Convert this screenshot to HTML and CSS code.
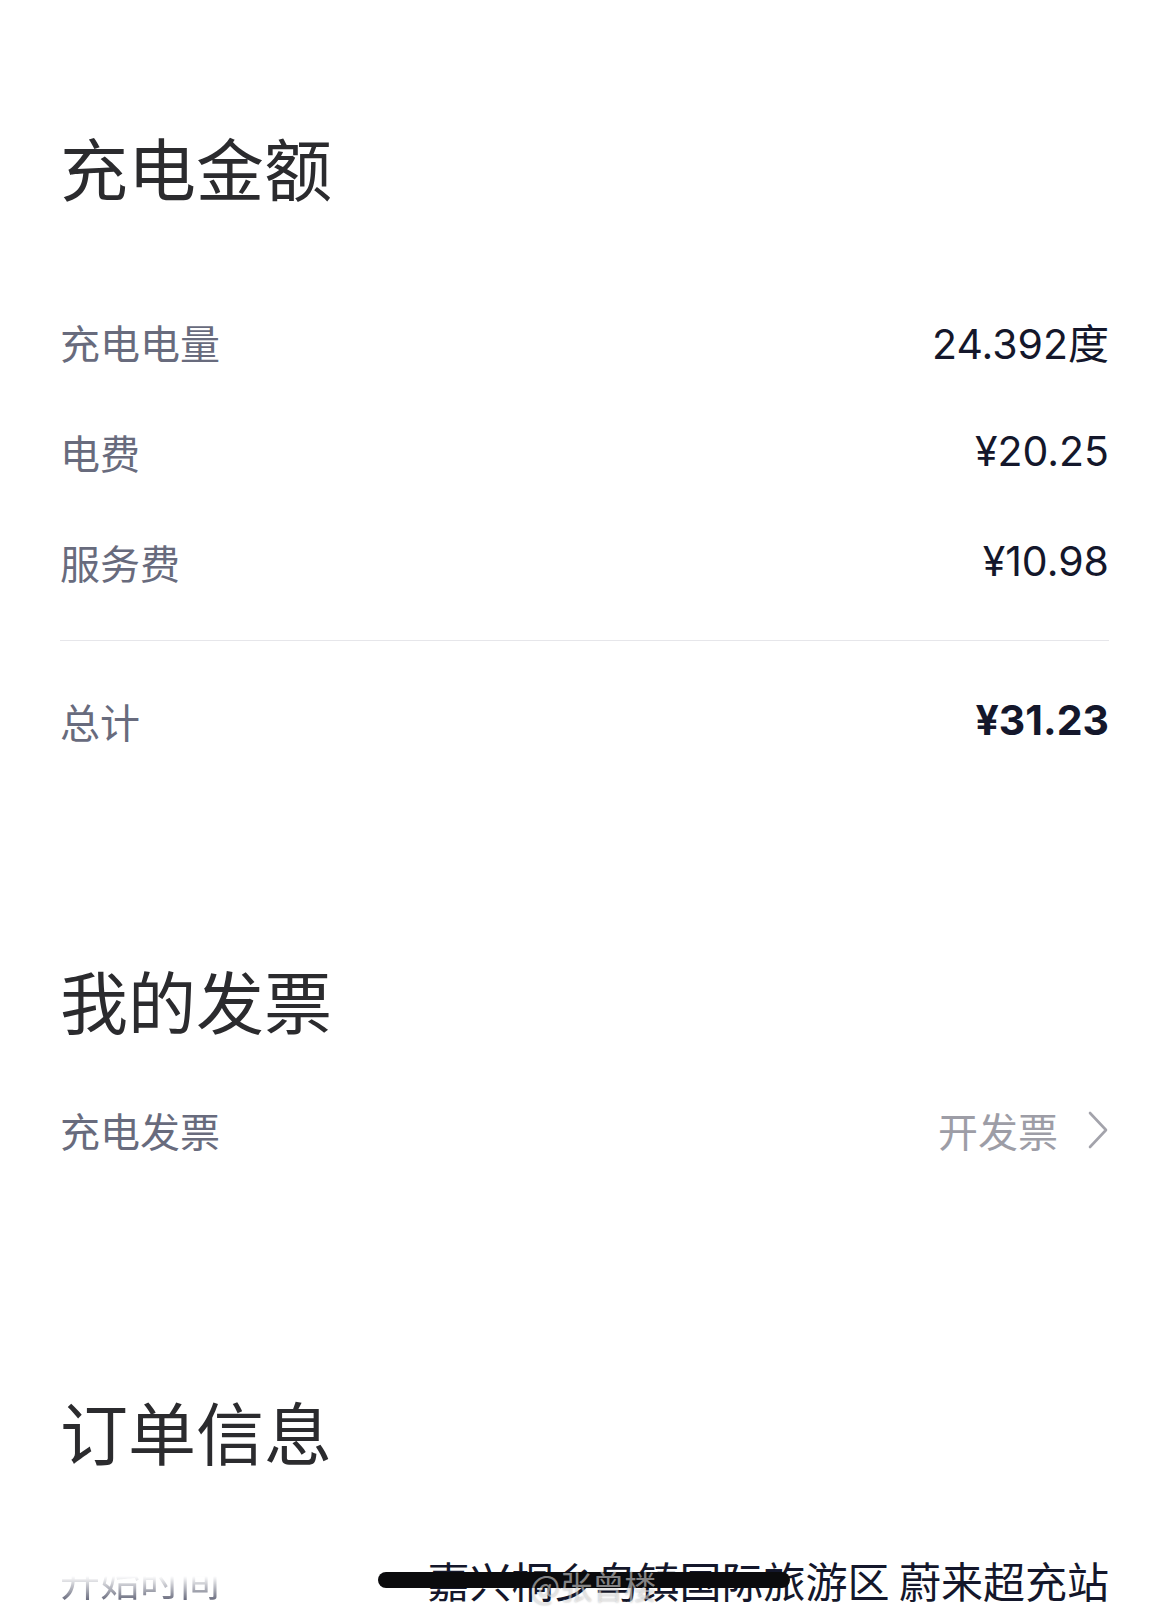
FILE: index.html
```html
<!DOCTYPE html>
<html lang="zh-CN">
<head>
<meta charset="utf-8">
<title>充电订单</title>
<link rel="stylesheet" href="styles.css">
</head>
<body>
<main class="page">
  <section class="section section-amount">
    <h1 class="section-title">充电金额</h1>
    <div class="rows">
      <div class="row"><span class="label">充电电量</span><span class="value">24.392度</span></div>
      <div class="row"><span class="label">电费</span><span class="value">¥20.25</span></div>
      <div class="row"><span class="label">服务费</span><span class="value">¥10.98</span></div>
    </div>
    <div class="divider"></div>
    <div class="row row-total"><span class="label">总计</span><span class="value value-bold">¥31.23</span></div>
  </section>

  <section class="section section-invoice">
    <h1 class="section-title">我的发票</h1>
    <div class="row row-invoice">
      <span class="label">充电发票</span>
      <span class="action">开发票
        <svg class="chevron" viewBox="0 0 22 40" width="22" height="40" aria-hidden="true"><path d="M3 3 L19 20 L3 37" fill="none" stroke="#a3a3ab" stroke-width="2.6" stroke-linecap="round" stroke-linejoin="round"/></svg>
      </span>
    </div>
  </section>

  <section class="section section-order">
    <h1 class="section-title">订单信息</h1>
    <div class="row row-last">
      <span class="label label-faded">开始时间</span>
      <span class="value value-station">嘉兴桐乡乌镇国际旅游区 蔚来超充站</span>
      <span class="redact"></span>
      <span class="watermark">@张曾楼</span>
    </div>
  </section>
</main>
</body>
</html>
```

FILE: styles.css
```css
html, body {
  margin: 0;
  padding: 0;
  background: #ffffff;
}
body {
  width: 1158px;
  height: 1610px;
  overflow: hidden;
  font-family: "Noto Sans CJK SC", "Noto Sans", sans-serif;
}
.page {
  padding: 132px 49px 0 60px;
}
.section-title {
  margin: 0;
  line-height: 69px;
  padding-bottom: 11px;
  font-size: 68px;
  font-weight: 400;
  color: #2b2b2e;
  letter-spacing: 0;
}
.rows {
  margin-top: 75px;
}
.row {
  height: 110px;
  display: flex;
  align-items: center;
  justify-content: space-between;
  font-size: 40px;
}
.label {
  color: #686b7d;
  font-weight: 400;
}
.value {
  font-family: Inter, "Noto Sans CJK SC", sans-serif;
  font-size: 41px;
  color: #14172b;
  font-weight: 400;
  position: relative;
  top: -1px;
}
.value-bold {
  font-weight: 700;
  top: -1px;
}
.divider {
  margin-top: 23px;
  height: 1px;
  background: #e6e6ea;
}
.row-total {
  margin-top: 25px;
}
.section-invoice {
  margin-top: 189px;
}
.row-invoice {
  margin-top: 30px;
}
.action {
  display: flex;
  align-items: center;
  gap: 29px;
  color: #9d9da6;
}
.chevron {
  display: block;
}
.section-order {
  margin-top: 211px;
}
.row-last {
  margin-top: 48px;
  position: relative;
}
.label-faded {
  color: #55586c;
  -webkit-mask-image: linear-gradient(to bottom, transparent 45%, rgba(0,0,0,0.85) 85%);
  mask-image: linear-gradient(to bottom, transparent 45%, rgba(0,0,0,0.85) 85%);
}
.value-station {
  font-family: "Noto Sans CJK SC", sans-serif;
  font-size: 42px;
  color: #14172b;
  top: 0;
}
.redact {
  position: absolute;
  left: 318px;
  top: 48px;
  width: 412px;
  height: 16px;
  border-radius: 8px;
  background: #0b0b0d;
}
.watermark {
  position: absolute;
  left: 470px;
  top: 38px;
  font-size: 32px;
  color: rgba(255, 255, 255, 0.5);
  text-shadow: 0 0 2px rgba(0, 0, 0, 0.3);
}
```
